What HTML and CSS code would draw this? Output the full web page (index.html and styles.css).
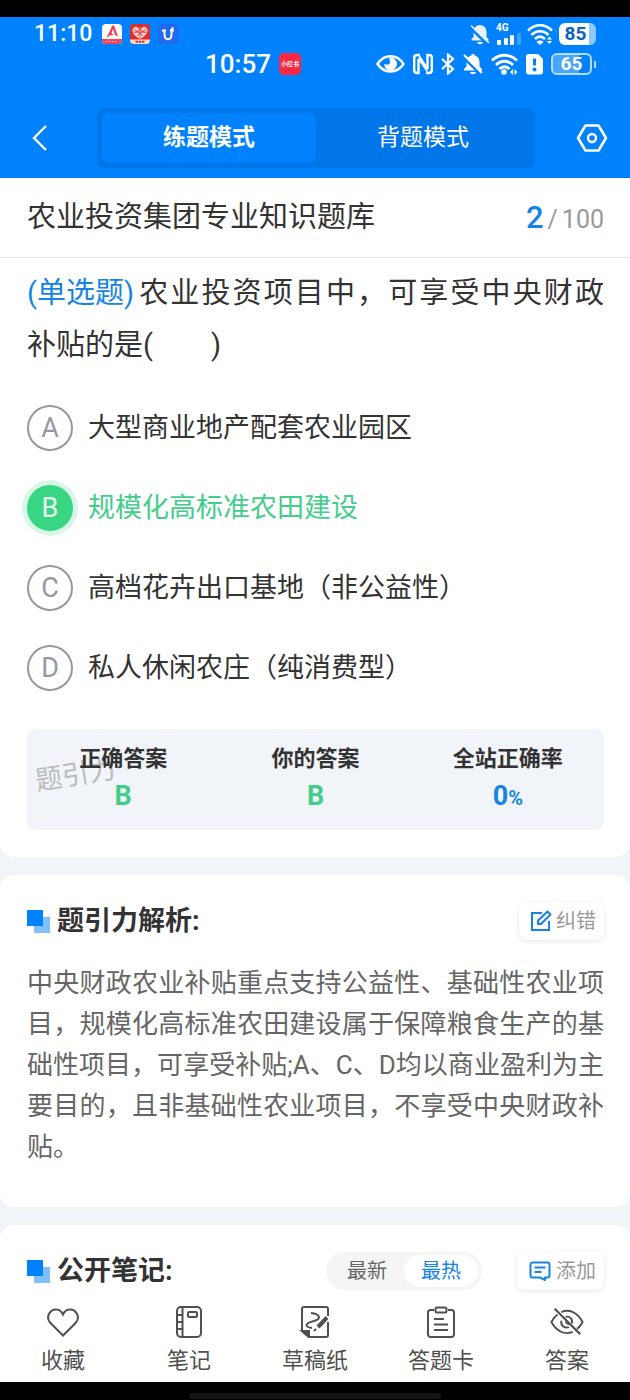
FILE: index.html
```html
<!DOCTYPE html>
<html lang="zh-CN">
<head>
<meta charset="utf-8">
<meta name="viewport" content="width=device-width, initial-scale=1">
<title>农业投资集团专业知识题库</title>
<link rel="stylesheet" href="styles.css">
</head>
<body>
<div class="page">
  <header class="top">
    <div class="status status-outer">
      <div class="status-left">
        <time class="clock">11:10</time>
        <svg class="app" viewBox="0 0 20 20" aria-hidden="true"><rect width="20" height="20" rx="4" fill="#fff"/><path d="M0 15h20v1a4 4 0 0 1-4 4H4a4 4 0 0 1-4-4z" fill="#f5455c"/><path d="M4 14C7 9 9 5 10 1.500l2 0 4 11-3-1.500-2-6-1.500 4 2 2-4 .500z" fill="#f23b50"/><path d="M4 17.500h12" stroke="#ffb3bd" stroke-width="1" stroke-dasharray="2 1"/></svg>
        <svg class="app" viewBox="0 0 20 20" aria-hidden="true"><rect width="20" height="20" rx="4" fill="#e02c2c"/><path d="M10 15C5 12 2 9 2.500 6 3 2 8 1.500 10 5c2-3.500 7-3 7.500 1 .5 3-2.500 6-7.500 9z" fill="#fbd9cf"/><path d="M4 5l9 7M7 3l8 6M16 5l-9 7M13 3L5 9M10 5v10M3 8h14" stroke="#e02c2c" stroke-width=".8"/><path d="M0 15.500h20V16a4 4 0 0 1-4 4H4a4 4 0 0 1-4-4z" fill="#fbd9cf"/><path d="M5.500 17.700h9" stroke="#c33" stroke-width="2" stroke-dasharray="2.500 .7"/></svg>
        <svg class="app" viewBox="0 0 20 20" aria-hidden="true"><rect width="20" height="20" rx="4" fill="#2468ee"/><path d="M4 6.500h4M12 6.500h4M6.500 5.500v4.500c0 7 7 7 7 0V6.500c0-1.500.5-2.500 2-2.500" fill="none" stroke="#fff" stroke-width="2"/></svg>
      </div>
      <div class="status-right gap-s">
        <svg width="20" height="22" viewBox="0 0 20 22" aria-hidden="true"><path d="M1.500 17.500V16l2-2V9c0-4 2.500-6.500 6-7 4.500 0 7 3 7 7v5l2 2v1.500z" fill="#e8f3ff"/><path d="M7 19h6c-.5 3-5.500 3-6 0z" fill="#e8f3ff"/><path d="M0 4.500L17 21" stroke="#0082ff" stroke-width="2.500"/><path d="M1 2.500L19 20" stroke="#e8f3ff" stroke-width="1.700"/></svg>
        <span class="signal"><b>4G</b>
          <svg width="25" height="12" viewBox="0 0 25 12" aria-hidden="true"><g fill="#fff"><rect x="1" y="7" width="4" height="5" rx="1"/><rect x="8" y="5" width="4" height="7" rx="1"/><rect x="14" y="2" width="4" height="10" rx="1"/></g><rect x="21" y="0" width="4" height="12" rx="1" fill="#fff" opacity=".25"/></svg>
        </span>
        <svg width="26" height="22" viewBox="0 0 26 22" aria-hidden="true"><g fill="none" stroke="#fff" stroke-width="2.600"><path d="M1 7.500C8 .500 18 .500 25 7.500"/><path d="M4.500 12c5-5 12-5 17 0"/><path d="M8 16c3-3 6.500-3 10 0"/></g><path d="M9.500 19c2-2 5-2 7 0L13 22z" fill="#fff"/><path d="M20 16.500l2.500-3 2.500 3zM20 18l2.500 3 2.500-3z" fill="#fff"/></svg>
        <span class="battery battery-solid">85</span>
      </div>
    </div>
    <div class="status status-inner">
      <div class="status-mid">
        <time class="clock clock-l">10:57</time>
        <span class="xhs">小红书</span>
      </div>
      <div class="status-right">
        <svg width="29" height="22" viewBox="0 0 29 22" aria-hidden="true"><path d="M1.500 11C8 .500 21 .500 27.500 11 21 21 8 21 1.500 11z" fill="none" stroke="#fff" stroke-width="2.500"/><path d="M14.500 4.500A6.500 6.500 0 1 1 8 11c1.500 1 6 1 6-1.500 0-2-1-3-.5-5z" fill="#fff"/></svg>
        <svg width="20" height="22" viewBox="0 0 20 22" aria-hidden="true"><path d="M7 2H4C2 2 1.200 3 1.200 5v12c0 2 .8 3 2.800 3h1.500V6M13 20h3c2 0 2.800-1 2.800-3V5c0-2-.8-3-2.800-3h-1.500v14" fill="none" stroke="#fff" stroke-width="2.400"/><path d="M6 1l8.500 13v6L5.500 7z" fill="#fff"/></svg>
        <svg width="14" height="22" viewBox="0 0 14 22" aria-hidden="true"><path d="M1 6l11 10-5 4.500v-19L12 6 1 16" fill="none" stroke="#fff" stroke-width="2.200"/></svg>
        <svg width="20" height="22" viewBox="0 0 20 22" aria-hidden="true"><path d="M1 17.500V16l2.500-2.500V9c0-4 2.500-6 5-6.500V1h3v1.500c3 .5 5 3 5 6.500v4.500L19 16v1.500z" fill="#fff"/><path d="M7 19h6c-.5 3-5.500 3-6 0z" fill="#fff"/><path d="M0 4l17 16.500" stroke="#0082ff" stroke-width="3"/><path d="M1 2l18 18" stroke="#fff" stroke-width="2.200"/></svg>
        <svg width="27" height="22" viewBox="0 0 27 22" aria-hidden="true"><g fill="none" stroke="#fff" stroke-width="2.800"><path d="M1 7.500c7-7 18-7 25 0"/><path d="M5 12c5-5 12-5 17 0"/><path d="M8.500 16c3-3 6.500-3 10 0"/></g><circle cx="13" cy="19" r="2.800" fill="#fff"/><path d="M22 16v6l-3-3zM23.500 16v6l3-3z" fill="#fff"/></svg>
        <svg width="17" height="22" viewBox="0 0 17 22" aria-hidden="true"><path d="M2.500 1H12l5 5v13c0 1.500-.8 2.500-2.500 2.500h-12C.8 21.500 0 20.500 0 19V3.500C0 2 .8 1 2.500 1z" fill="#fff"/><path d="M8.500 5.500v7" stroke="#0082ff" stroke-width="3"/><circle cx="8.500" cy="16.500" r="2" fill="#0082ff"/></svg>
        <span class="battery battery-line">65</span>
      </div>
    </div>
    <nav class="bar">
      <button class="icon-btn" aria-label="返回"><svg width="24" height="30" viewBox="0 0 24 30"><path d="M17 3L5 15l12 12" fill="none" stroke="#fff" stroke-width="2.400"/></svg></button>
      <div class="modes" role="tablist">
        <button class="mode mode-on" role="tab" aria-selected="true">练题模式</button>
        <button class="mode" role="tab" aria-selected="false">背题模式</button>
      </div>
      <button class="icon-btn" aria-label="设置"><svg width="32" height="30" viewBox="0 0 32 30"><path d="M9.500 2.500h13L30 15l-7.500 12.500h-13L2 15z" fill="none" stroke="#fff" stroke-width="2.600" stroke-linejoin="round"/><circle cx="16" cy="15" r="4" fill="none" stroke="#fff" stroke-width="2.400"/></svg></button>
    </nav>
  </header>

  <main class="content">
    <section class="card card-first">
      <div class="bank">
        <h1 class="bank-name">农业投资集团专业知识题库</h1>
        <p class="count"><b class="count-now">2</b><span>/</span><span>100</span></p>
      </div>
      <p class="question"><span class="kind">(单选题)</span>农业投资项目中，可享受中央财政<span class="keep">补贴的是(　　)</span></p>
      <div class="options" role="radiogroup" aria-label="选项">
        <label class="option"><input class="pick" type="radio" name="answer"><span class="mark">A</span><span>大型商业地产配套农业园区</span></label>
        <label class="option"><input class="pick" type="radio" name="answer" checked><span class="mark">B</span><span>规模化高标准农田建设</span></label>
        <label class="option"><input class="pick" type="radio" name="answer"><span class="mark">C</span><span>高档花卉出口基地（非公益性）</span></label>
        <label class="option"><input class="pick" type="radio" name="answer"><span class="mark">D</span><span>私人休闲农庄（纯消费型）</span></label>
      </div>
      <div class="stats">
        <span class="watermark">题引力</span>
        <div class="stat"><span class="stat-name">正确答案</span><b class="stat-value">B</b></div>
        <div class="stat"><span class="stat-name">你的答案</span><b class="stat-value">B</b></div>
        <div class="stat"><span class="stat-name">全站正确率</span><b class="stat-value stat-rate">0<small class="percent">%</small></b></div>
      </div>
    </section>

    <section class="card card-explain">
      <div class="head">
        <h2 class="title">题引力解析:</h2>
        <button class="chip"><svg width="22" height="22" viewBox="0 0 22 22" aria-hidden="true"><path d="M12 3H2v17h17V11" fill="none" stroke="#1684e6" stroke-width="2"/><path d="M8 14v-3.500L17.500 1.500l3 3L11 14z" fill="none" stroke="#1684e6" stroke-width="2" stroke-linejoin="round"/></svg>纠错</button>
      </div>
      <p class="explain">中央财政农业补贴重点支持公益性、基础性农业项目，规模化高标准农田建设属于保障粮食生产的基础性项目，可享受补贴;A、C、D均以商业盈利为主要目的，且非基础性农业项目，不享受中央财政补贴。</p>
    </section>

    <section class="card card-notes">
      <div class="head">
        <h2 class="title">公开笔记:</h2>
        <div class="sort">
          <button class="sort-item">最新</button>
          <button class="sort-item sort-on">最热</button>
        </div>
        <button class="chip"><svg width="24" height="22" viewBox="0 0 24 22" aria-hidden="true"><path d="M10 17.500H4.500a2 2 0 0 1-2-2v-11a2 2 0 0 1 2-2h15a2 2 0 0 1 2 2v11a2 2 0 0 1-2 2H17v2.500l-5-2.500z" fill="none" stroke="#1684e6" stroke-width="2" stroke-linejoin="round"/><path d="M6.500 7.500h11M6.500 12h7" stroke="#1684e6" stroke-width="2"/></svg>添加</button>
      </div>
    </section>
  </main>

  <nav class="tools">
    <button class="tool"><svg class="tool-icon" viewBox="0 0 32 32" aria-hidden="true"><path d="M16 29.500L3 16.500C-2 10 4 3 9.500 3.500c3 0 5 2 6.500 5 1.500-3 3.500-5 6.500-5C28 3 34 10 29 16.500z"/></svg>收藏</button>
    <button class="tool"><svg class="tool-icon" viewBox="0 0 32 32" aria-hidden="true"><rect x="4" y="1" width="24" height="30" rx="4"/><path d="M9.500 1v30M4 9h5.500M4 16h5.500M4 23h5.500"/><rect x="15" y="6" width="9" height="5" rx="1"/></svg>笔记</button>
    <button class="tool"><svg class="tool-icon" viewBox="0 0 32 32" aria-hidden="true"><path d="M29 10V3a2 2 0 0 0-2-2H5a2 2 0 0 0-2 2v22l7 6h17a2 2 0 0 0 2-2V16"/><path d="M3 25h7v6z" fill="#505050"/><path d="M12 7c9 1 11 6 3 8-9 2-10 6-2 7"/><path d="M28 11.500L19 21" stroke-width="4"/><path d="M17 23l-2 2"/></svg>草稿纸</button>
    <button class="tool"><svg class="tool-icon" viewBox="0 0 32 32" aria-hidden="true"><path d="M9 4H5.500A2.500 2.500 0 0 0 3 6.500v22A2.500 2.500 0 0 0 5.500 31h21a2.500 2.500 0 0 0 2.500-2.500v-22A2.500 2.500 0 0 0 26.500 4H23"/><rect x="10.500" y="1.500" width="11" height="5" rx="1.500"/><path d="M9 13h10M9 18.500h14M9 24h14"/></svg>答题卡</button>
    <button class="tool"><svg class="tool-icon" viewBox="0 0 36 32" aria-hidden="true"><path d="M12 5.500c8-3.500 17 0 22.500 10.500-1.500 3-3.500 5.500-6 7.500M24 26.500C15.500 30 7 26 1.500 16 3 13 5 10 8 8"/><path d="M16.500 10.500c5-1 8 3 6.500 7M20 21.500c-5 1.500-9-2-8-7M16.500 15.500c1 2 2 2.500 4 3"/><path d="M5 2l27 27" stroke-width="2.400"/></svg>答案</button>
  </nav>
  <footer class="gesture"><span class="gesture-bar"></span></footer>
</div>
</body>
</html>
```
FILE: styles.css
```css
* { box-sizing: border-box; }

body {
  margin: 0;
  background: #f1f5f9;
  color: #333;
  font-family: Roboto, "Noto Sans CJK SC", sans-serif;
  line-height: 1.4;
}

h1, h2, p { margin: 0; }

button {
  margin: 0;
  padding: 0;
  border: 0;
  background: none;
  color: inherit;
  font: inherit;
  cursor: pointer;
}

svg { display: block; flex: none; }

.page {
  display: flex;
  flex-direction: column;
  min-height: 100vh;
}

/* Header */
.top {
  border-top: 17px solid #000;
  background: #0082ff;
  color: #fff;
}

.status {
  display: flex;
  align-items: center;
  padding: 0 34px;
}

.status-outer { height: 34px; justify-content: space-between; }
.status-inner { height: 26px; justify-content: flex-end; gap: 75px; }
.status-left, .status-mid, .status-right { display: flex; align-items: center; gap: 8px; }
.status-right.gap-s { gap: 6px; }

.clock { font-size: 24px; font-weight: 500; line-height: 28px; }
.status-left .clock { margin-right: 2px; font-size: 23px; }
.clock-l { font-size: 26px; }
.app { width: 20px; height: 20px; }

.xhs {
  display: flex;
  align-items: center;
  justify-content: center;
  width: 22px;
  height: 22px;
  border-radius: 5px;
  background: #fb2843;
  font-size: 6px;
  font-weight: 700;
  white-space: nowrap;
}

.signal { display: flex; flex-direction: column; font-size: 10px; line-height: 10px; }

.battery {
  display: flex;
  align-items: center;
  justify-content: center;
  height: 22px;
  border-radius: 6px;
  font-size: 19px;
  font-weight: 700;
  line-height: 22px;
}

.battery-solid {
  width: 37px;
  padding-right: 4px;
  background: linear-gradient(90deg, #fff 30px, #8fc7ff 30px);
  color: #0c62bd;
}

.battery-line {
  position: relative;
  width: 41px;
  margin-right: 4px;
  border: 2px solid #b5dbff;
  background: linear-gradient(90deg, #4aa5ff 26px, transparent 26px);
}

.battery-line::after {
  content: "";
  position: absolute;
  top: 6px;
  right: -6px;
  width: 2px;
  height: 7px;
  background: #b5dbff;
}

.bar {
  display: flex;
  align-items: center;
  justify-content: space-between;
  padding: 31px 22px 10px 29px;
}

.icon-btn { display: flex; }

.modes {
  display: flex;
  flex: 1;
  margin: 0 41px 0 44px;
  padding: 5px;
  border-radius: 8px;
  background: #0076e8;
}

.mode {
  flex: 1;
  height: 50px;
  border-radius: 6px;
  font-size: 23px;
}

.mode-on { background: #0082ff; font-weight: 700; }

/* Cards */
.content { display: flex; flex: 1; flex-direction: column; gap: 18px; }
.card { padding: 27px 26px 27px 27px; border-radius: 14px; background: #fff; }
.card-first { padding-top: 0; border-radius: 0 0 14px 14px; }
.card-explain { padding-bottom: 39px; }
.card-notes { flex: 1; padding-bottom: 5px; border-radius: 14px 14px 0 0; }

.bank {
  display: flex;
  align-items: center;
  justify-content: space-between;
  height: 80px;
  margin: 0 -26px 0 -27px;
  padding: 0 26px 0 27px;
  border-bottom: 1px solid #e6e6e6;
}

.bank-name { font-size: 29px; font-weight: 400; }

.count {
  display: flex;
  align-items: baseline;
  gap: 4px;
  color: #999;
  font-size: 25px;
}

.count-now { color: #1684e6; font-size: 31px; font-weight: 500; }

.question {
  padding-top: 9px;
  font-size: 29px;
  line-height: 52px;
  text-align: justify;
}

.kind { display: inline-block; margin-right: 3px; color: #1684e6; }
.keep { white-space: nowrap; }

.options { display: flex; flex-direction: column; gap: 34px; margin: 34px 0 38px; }

.option {
  display: flex;
  align-items: center;
  position: relative;
  gap: 15px;
  font-size: 27px;
  line-height: 40px;
}

.pick { position: absolute; width: 46px; height: 46px; margin: 0; opacity: 0; }

.mark {
  display: flex;
  flex: none;
  align-items: center;
  justify-content: center;
  width: 46px;
  height: 46px;
  border: 2px solid #9696a5;
  border-radius: 50%;
  color: #9696a5;
}

.pick:checked ~ span { color: #42cd8b; }

.pick:checked + .mark {
  border-color: #38d683;
  background: #38d683;
  box-shadow: 0 0 0 5px #d9f7e7;
  color: #e8fff3;
}

.stats {
  display: flex;
  position: relative;
  padding: 15px 0 17px;
  border-radius: 9px;
  background: #f1f5f9;
}

.stat {
  display: flex;
  flex: 1;
  flex-direction: column;
  align-items: center;
  position: relative;
  gap: 5px;
}

.stat-name { font-size: 22px; font-weight: 700; line-height: 30px; }
.stat-value { color: #42cd8b; font-size: 27px; line-height: 34px; }
.stat-rate { color: #1684e6; }
.percent { font-size: 20px; line-height: 20px; }

.watermark {
  position: absolute;
  top: 26px;
  left: 8px;
  color: #bbb;
  font-size: 27px;
  line-height: 40px;
  transform: rotate(-9deg);
}

.head { display: flex; align-items: center; }

.title {
  display: flex;
  flex: 1;
  align-items: center;
  gap: 7px;
  font-size: 27px;
  font-weight: 700;
  line-height: 38px;
}

.title::before {
  content: "";
  width: 23px;
  height: 23px;
  background:
    linear-gradient(#0082ff, #0082ff) 0 0 / 16px 16px no-repeat,
    linear-gradient(#80c0ff, #80c0ff) 100% 100% / 16px 16px no-repeat;
}

.chip {
  display: flex;
  align-items: center;
  gap: 4px;
  height: 38px;
  padding: 0 8px 0 11px;
  border-radius: 8px;
  box-shadow: 0 1px 5px rgba(0, 0, 0, 0.1);
  color: #999;
  font-size: 20px;
}

.explain {
  margin-top: 23px;
  color: #666;
  font-size: 26px;
  line-height: 41px;
  text-align: justify;
}

.sort {
  display: flex;
  margin-right: 35px;
  padding: 3px 4px;
  border-radius: 19px;
  background: #f5f5f5;
  color: #666;
}

.sort-item { width: 74px; height: 32px; border-radius: 16px; font-size: 20px; line-height: 32px; }
.sort-on { background: #fff; color: #1684e6; }

/* Bottom tools */
.tools {
  display: grid;
  grid-template-columns: repeat(5, 1fr);
  padding: 10px 0 6px;
  background: #fff;
}

.tool {
  display: flex;
  flex-direction: column;
  align-items: center;
  gap: 8px;
  color: #505050;
  font-size: 22px;
  line-height: 30px;
}

.tool-icon {
  width: 34px;
  height: 32px;
  fill: none;
  stroke: #505050;
  stroke-width: 2;
}

.gesture { display: flex; justify-content: center; height: 18px; padding-top: 11px; background: #000; }
.gesture-bar { width: 40%; height: 6px; border-radius: 3px; background: #151515; }
```
